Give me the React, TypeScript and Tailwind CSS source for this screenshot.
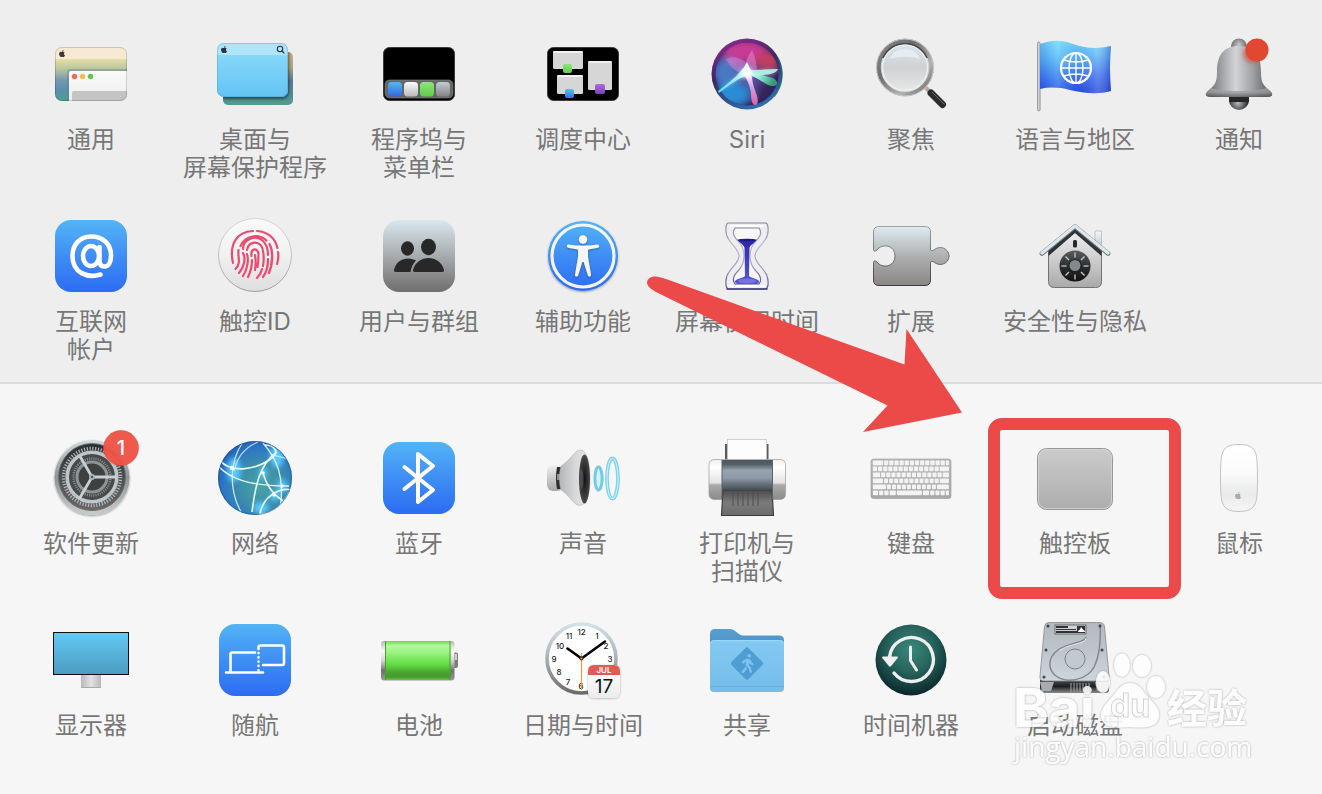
import React from "react";
import { FaApple, FaWalking } from "react-icons/fa";

type IconProps = { children: React.ReactNode };

const Icon: React.FC<IconProps> = ({ children }) => (
  <svg viewBox="0 0 80 80" className="size-20 overflow-visible" aria-hidden="true">
    {children}
  </svg>
);

// Vertical gradient, colours spread evenly unless stops are given
const VGrad: React.FC<{ id: string; colors: string[]; at?: number[] }> = ({ id, colors, at }) => (
  <linearGradient id={id} x1="0" y1="0" x2="0" y2="1">
    {colors.map((c, i) => (
      <stop key={i} offset={at ? at[i] : i / (colors.length - 1)} stopColor={c} />
    ))}
  </linearGradient>
);

const BlueTile: React.FC<{ id: string; children: React.ReactNode }> = ({ id, children }) => (
  <Icon>
    <VGrad id={id} colors={["#53b4f5", "#3f8ef5", "#2d6cf3"]} />
    <rect x="4" y="4" width="72" height="72" rx="16" fill={`url(#${id})`} />
    {children}
  </Icon>
);

const GeneralIcon = () => (
  <Icon>
    <VGrad id="genBg" colors={["#e6dfa8", "#e6dfa8", "#bcc6a0", "#7397ad", "#5a8fae", "#4ca08f"]} at={[0, 0.22, 0.4, 0.62, 0.8, 1]} />
    <VGrad id="genWin" colors={["#fafafa", "#ececec"]} />
    <clipPath id="genClip">
      <rect x="4" y="13" width="72" height="54" rx="7" />
    </clipPath>
    <g clipPath="url(#genClip)">
      <rect x="4" y="13" width="72" height="54" fill="url(#genBg)" />
      <rect x="4" y="13" width="72" height="12" fill="#f8ead2" />
      <path d="M17 70V38q0-2 2-2h60" fill="none" stroke="#5c7a7e" strokeOpacity=".35" strokeWidth="2" />
      <path d="M18 70V39q0-2 2-2h60v33z" fill="url(#genWin)" />
      <path d="M21 70V59q0-2 2-2h60v13z" fill="#c4c4c4" />
    </g>
    <rect x="4.5" y="13.5" width="71" height="53" rx="6.5" fill="none" stroke="#000" strokeOpacity=".16" />
    <circle cx="23.5" cy="42.5" r="2.7" fill="#ee6a5f" />
    <circle cx="31.5" cy="42.5" r="2.7" fill="#f5bd4f" />
    <circle cx="39.5" cy="42.5" r="2.7" fill="#61c454" />
    <FaApple x="7" y="15.5" size={8} color="#3a3a38" />
  </Icon>
);

const DesktopIcon = () => (
  <Icon>
    <VGrad id="deskBack" colors={["#c9ae84", "#a9a581", "#56799a", "#4f8a98", "#549b8e"]} at={[0, 0.3, 0.55, 0.75, 1]} />
    <VGrad id="deskFront" colors={["#92dcf8", "#78d0f8", "#63c4f5"]} />
    <filter id="deskShadow" x="-20%" y="-20%" width="140%" height="140%">
      <feDropShadow dx="1" dy="2" stdDeviation="1.8" floodOpacity=".5" />
    </filter>
    <clipPath id="deskClip">
      <rect x="8" y="18" width="70" height="53" rx="5" />
    </clipPath>
    <rect x="8" y="18" width="70" height="53" rx="5" fill="url(#deskBack)" />
    <g clipPath="url(#deskClip)">
      <rect x="2" y="9" width="71" height="54" rx="7" fill="#63c4f5" filter="url(#deskShadow)" />
    </g>
    <rect x="2" y="9" width="71" height="54" rx="7" fill="url(#deskFront)" />
    <path d="M2 21v-5q0-7 7-7h57q7 0 7 7v5z" fill="#aee5fa" />
    <rect x="2.5" y="9.5" width="70" height="53" rx="6.5" fill="none" stroke="#3c87ad" strokeOpacity=".3" />
    <FaApple x="5" y="11.5" size={8} color="#2c3438" />
    <circle cx="65" cy="15" r="2.7" fill="none" stroke="#2c3438" strokeWidth="1.1" />
    <path d="M67 17l2 2.2" stroke="#2c3438" strokeWidth="1.2" strokeLinecap="round" />
  </Icon>
);

const DockIcon = () => (
  <Icon>
    <VGrad id="dockBlue" colors={["#52b8f3", "#3567e0"]} />
    <VGrad id="dockWhite" colors={["#fbfbfb", "#b9b9b9"]} />
    <VGrad id="dockGreen" colors={["#8de57a", "#5fcb4b"]} />
    <VGrad id="dockGray" colors={["#c3ccd2", "#828486"]} />
    <rect x="4.5" y="13.5" width="71" height="53" rx="6" fill="#000" stroke="#3b3b3b" />
    <rect x="6" y="46" width="68" height="18" rx="4.5" fill="#656565" stroke="#888" strokeWidth=".6" />
    <rect x="9" y="48" width="14" height="14.5" rx="3.5" fill="url(#dockBlue)" />
    <rect x="25" y="48" width="14" height="14.5" rx="3.5" fill="url(#dockWhite)" />
    <rect x="41" y="48" width="14" height="14.5" rx="3.5" fill="url(#dockGreen)" />
    <rect x="57" y="48" width="14" height="14.5" rx="3.5" fill="url(#dockGray)" />
  </Icon>
);

const MissionIcon = () => (
  <Icon>
    <VGrad id="misBlue" colors={["#57c0ea", "#3573dd"]} />
    <VGrad id="misPurple" colors={["#b06be0", "#7d3fb4"]} />
    <VGrad id="misGreen" colors={["#8de57a", "#5fcb4b"]} />
    <rect x="4.5" y="13.5" width="71" height="53" rx="6" fill="#000" stroke="#3b3b3b" />
    <rect x="10" y="17" width="30" height="18" rx="1.5" fill="#d6d6d6" />
    <rect x="14" y="41" width="26" height="19" rx="1.5" fill="#d6d6d6" />
    <rect x="45" y="27" width="24" height="29" rx="1.5" fill="#d6d6d6" />
    <path d="M10.5 18h29M14.5 42h25M45.5 28h23" stroke="#f1f1f1" strokeWidth="2" />
    <rect x="20" y="30" width="9" height="9" rx="2" fill="url(#misGreen)" />
    <rect x="22" y="55" width="9" height="9" rx="2" fill="url(#misBlue)" />
    <rect x="52" y="50" width="10" height="10" rx="2" fill="url(#misPurple)" />
  </Icon>
);

const SiriIcon = () => (
  <Icon>
    <linearGradient id="siriRim" x1=".2" y1="0" x2=".6" y2="1">
      <stop offset="0" stopColor="#8d2a92" />
      <stop offset=".45" stopColor="#3a2a63" />
      <stop offset="1" stopColor="#2d6fae" />
    </linearGradient>
    <radialGradient id="siriBase">
      <stop offset="0" stopColor="#6d5aae" />
      <stop offset=".8" stopColor="#3f3172" />
      <stop offset="1" stopColor="#241a50" />
    </radialGradient>
    <filter id="siriBlur" x="-50%" y="-50%" width="200%" height="200%">
      <feGaussianBlur stdDeviation="4.5" />
    </filter>
    <filter id="siriGlow" x="-50%" y="-50%" width="200%" height="200%">
      <feGaussianBlur stdDeviation="2" />
    </filter>
    <clipPath id="siriClip">
      <circle cx="40" cy="40" r="31.5" />
    </clipPath>
    <linearGradient id="siriLeft" x1="1" y1="0" x2="0" y2="1">
      <stop offset="0" stopColor="#fff" />
      <stop offset="1" stopColor="#4fdcea" />
    </linearGradient>
    <linearGradient id="siriRight" x1="0" y1="0" x2="1" y2=".3">
      <stop offset="0" stopColor="#fff" />
      <stop offset=".5" stopColor="#7fe8cf" />
      <stop offset="1" stopColor="#3b9674" />
    </linearGradient>
    <VGrad id="siriDown" colors={["#fff", "#d59be0", "#dd5fa6"]} />
    <circle cx="40" cy="40" r="35.5" fill="url(#siriRim)" />
    <path d="M71 24a35 35 0 0 1-4 39" fill="none" stroke="#2a7a5c" strokeWidth="1.2" strokeOpacity=".7" />
    <g clipPath="url(#siriClip)">
      <circle cx="40" cy="40" r="32" fill="url(#siriBase)" />
      <g filter="url(#siriBlur)">
        <ellipse cx="38" cy="17" rx="23" ry="12" fill="#c83a94" />
        <ellipse cx="61" cy="27" rx="13" ry="11" fill="#c23e5e" />
        <ellipse cx="18" cy="38" rx="13" ry="14" fill="#4a78c4" />
        <ellipse cx="26" cy="60" rx="18" ry="13" fill="#2a8bd6" />
        <ellipse cx="64" cy="60" rx="12" ry="12" fill="#33245a" />
      </g>
      <path d="M19 25c10-5 21 1 26 12L40 41C31 39 24 35 19 25z" fill="#d48be0" fillOpacity=".5" />
      <path d="M45 16c4 9 6 18 4 26l-12-5c1-7 3-14 8-21z" fill="#f08ad0" fillOpacity=".5" />
    </g>
    <path d="M13 57C23 49 29 44 33 38c4-2 7-1 11 1 9-2 19-3 26-3-1 3-11 5-22 5l-10 1C29 46 22 52 13 57z" fill="#9ff2f0" filter="url(#siriGlow)" opacity=".7" />
    <path d="M36 37c4 9 7 15 8 22 0 6 1 12 4 12 4 0 3-7 1-12-3-7-4-14-5-22z" fill="url(#siriDown)" />
    <path d="M44 38c8 2 15 4 22 6 6 3 5 9-1 8-7-1-13-8-23-11z" fill="url(#siriRight)" />
    <path d="M40 36c10 0 20-1 31-1-2 6-14 6-29 7z" fill="#b6f5e8" fillOpacity=".9" />
    <path d="M11 57c9-7 17-13 21-18 3-3 6-7 8-11l5 11-5 3c-10 2-18 10-28 17z" fill="url(#siriLeft)" />
    <circle cx="40" cy="39" r="5" fill="#fff" filter="url(#siriGlow)" />
  </Icon>
);

const SpotlightIcon = () => (
  <Icon>
    <linearGradient id="spotRing" x1="0" y1="0" x2="1" y2="1">
      <stop offset="0" stopColor="#8a8a8a" />
      <stop offset=".35" stopColor="#6d6d6d" />
      <stop offset=".7" stopColor="#b4b4b4" />
      <stop offset="1" stopColor="#5f5f5f" />
    </linearGradient>
    <VGrad id="spotLens" colors={["#dce7f0", "#cfd2d4", "#e9e9e9"]} />
    <path d="M53 52l7 7" stroke="#a9a9a9" strokeWidth="4" />
    <path d="M60 59l11.5 11.5" stroke="#2c2c2c" strokeWidth="7" strokeLinecap="round" />
    <path d="M61 58l12 12" stroke="#6a6a6a" strokeWidth="1" strokeLinecap="round" />
    <circle cx="34" cy="33.5" r="26.5" fill="url(#spotLens)" stroke="url(#spotRing)" strokeWidth="4.5" />
    <circle cx="34" cy="33.5" r="28.5" fill="none" stroke="#c9c9c9" strokeWidth="1" />
    <path d="M12 24a24 24 0 0 1 44 0" fill="none" stroke="#4a4a4a" strokeWidth="1.8" />
    <circle cx="34" cy="33.5" r="22.5" fill="none" stroke="#eef2f5" strokeWidth="1.2" />
    <path d="M19 25c4-13 26-13 30 0-9-3-21-3-30 0z" fill="#e9f1f7" fillOpacity=".8" />
    <circle cx="55" cy="54" r="1.5" fill="#e0a988" />
  </Icon>
);

const FlagIcon = () => (
  <Icon>
    <linearGradient id="flagBlue" x1="0" y1="0" x2=".12" y2="1">
      <stop offset="0" stopColor="#7fe3f7" />
      <stop offset=".35" stopColor="#5fb9f5" />
      <stop offset=".75" stopColor="#3c6ff0" />
      <stop offset="1" stopColor="#2d50dc" />
    </linearGradient>
    <linearGradient id="flagFold">
      <stop offset="0" stopColor="#0c3cc8" stopOpacity=".25" />
      <stop offset=".25" stopColor="#8ff0ff" stopOpacity=".25" />
      <stop offset=".55" stopColor="#1d4fd0" stopOpacity=".08" />
      <stop offset=".8" stopColor="#fff" stopOpacity=".18" />
      <stop offset="1" stopColor="#1433b4" stopOpacity=".4" />
    </linearGradient>
    <rect x="2.5" y="8" width="2.6" height="69" rx="1.3" fill="#cfcfd2" stroke="#8d8d92" strokeWidth=".8" />
    <path d="M5 10c9-3 18-5 30-1 16 6 27 6 41 3q-2 22 0 45c-14 4-28 2-41-1-11-3-20-3-30-1z" fill="url(#flagBlue)" />
    <path d="M5 10c9-3 18-5 30-1 16 6 27 6 41 3q-2 22 0 45c-14 4-28 2-41-1-11-3-20-3-30-1z" fill="url(#flagFold)" />
    <g fill="none" stroke="#fff" strokeWidth="1.4">
      <circle cx="41" cy="34" r="15" strokeWidth="2.2" />
      <ellipse cx="41" cy="34" rx="7" ry="15" />
      <path d="M41 19v30M26 34h30M29 26q12 4 24 0M29 42q12-4 24 0" />
    </g>
  </Icon>
);

const BellIcon = () => (
  <Icon>
    <linearGradient id="bellBody">
      <stop offset="0" stopColor="#5f6163" />
      <stop offset=".25" stopColor="#a3a5a8" />
      <stop offset=".45" stopColor="#d2d4d7" />
      <stop offset=".7" stopColor="#a0a2a5" />
      <stop offset="1" stopColor="#545658" />
    </linearGradient>
    <VGrad id="bellLip" colors={["#a9abad", "#96989a", "#4c4e50"]} />
    <radialGradient id="bellKnob" cx=".5" cy=".4">
      <stop offset="0" stopColor="#c9cbcd" />
      <stop offset="1" stopColor="#6b6d6f" />
    </radialGradient>
    <radialGradient id="bellBall" cx=".45" cy=".65">
      <stop offset="0" stopColor="#b9bbbd" />
      <stop offset="1" stopColor="#27292b" />
    </radialGradient>
    <filter id="bellGlow" x="-50%" y="-50%" width="200%" height="200%">
      <feGaussianBlur stdDeviation="2" />
    </filter>
    <circle cx="40" cy="12.5" r="8" fill="url(#bellKnob)" />
    <circle cx="40" cy="66" r="10" fill="url(#bellBall)" />
    <path d="M30 62h20v6H30z" fill="#25282a" />
    <path d="M18 38c0-19 8-26 22-26s22 7 22 26c0 10 2 13 8 18 5 4 4 7-2 7H12c-6 0-7-3-2-7 6-5 8-8 8-18z" fill="url(#bellBody)" />
    <path d="M12 54c12 4 44 4 56 0l3 3c4 4 2 6-3 6H12c-5 0-7-2-3-6z" fill="url(#bellLip)" fillOpacity=".75" />
    <circle cx="53" cy="20" r="9" fill="#cf4430" fillOpacity=".6" filter="url(#bellGlow)" />
    <circle cx="58" cy="16" r="11.5" fill="#e24731" />
  </Icon>
);

const InternetIcon = () => (
  <BlueTile id="atBg">
    <g fill="none" stroke="#fff" strokeWidth="4.6" strokeLinecap="round" strokeLinejoin="round">
      <ellipse cx="40" cy="40" rx="8" ry="10" />
      <path d="M48.5 31v13.5c0 4 2 6 5 6 4 0 6.5-4 6.5-11C60 27 51 20.5 40 20.5c-11 0-18.5 8-18.5 19.5 0 17 15 22.5 28 18.5" />
    </g>
  </BlueTile>
);

const TouchIdIcon = () => (
  <Icon>
    <VGrad id="tidBg" colors={["#fafafa", "#f1f1f1", "#dedede"]} />
    <VGrad id="tidEdge" colors={["#d6d6d6", "#c3c3c3", "#9b9b9b"]} />
    <circle cx="40" cy="39" r="36.5" fill="url(#tidBg)" stroke="url(#tidEdge)" />
    <g fill="none" stroke="#ec4a6e" strokeWidth="2.2" strokeLinecap="round">
      <path d="M18 47C14 29 21 15.500 38 15M42 15c11 1 18 7 20.500 17M63 36q1 6-1 12" />
      <path d="M25.500 30c5-11 18-12.500 26-5.500M23.500 34c-1 7 3 13-3 19M54.500 28c4 7 3 14 1.500 21M57 38c1 8-1 14-3 19" />
      <path d="M28 33c0-10 12-14 19-9 5 4 6 9 6 15M28 37c3 6 1 14-4 20M53 43c0 7-1 13-5 18" />
      <path d="M32 34c1-10 15-10 16 1 1 5 1 9 0 15M32 38c2 7 0 16-4 22M47 53q-1 5-5 9" />
      <path d="M36.500 40c-1-8 6-9 7-2 0 5 0 8-1 13M37 44c0 6-1 11-4 17M40 39c1 6 1 10 0 15" />
    </g>
  </Icon>
);

const UsersIcon = () => (
  <Icon>
    <VGrad id="usersBg" colors={["#d9e7ef", "#a7abae", "#706e6e"]} />
    <rect x="4" y="4" width="72" height="72" rx="16" fill="url(#usersBg)" />
    <g fill="#282828">
      <ellipse cx="28.5" cy="32.5" rx="6.5" ry="7.2" />
      <ellipse cx="49.5" cy="31" rx="7.5" ry="8.2" />
      <path d="M17 56c-2 0-2-1-2-2 2-8 8-11.5 14-11.5 3 0 6 1 8 2-3 3-5 7-5.5 11.5z" />
      <path d="M36 56c-2 0-2-1-2-2 2-8 9-12 15.5-12S63 46 65 54c0 1 0 2-2 2z" />
    </g>
  </Icon>
);

const AccessIcon = () => (
  <Icon>
    <VGrad id="accBg" colors={["#53b4f5", "#3f8ef5", "#2d6cf3"]} />
    <filter id="accShadow" x="-20%" y="-20%" width="140%" height="140%">
      <feDropShadow dx="0" dy="1" stdDeviation="1" floodOpacity=".35" />
    </filter>
    <circle cx="40" cy="40" r="35" fill="url(#accBg)" filter="url(#accShadow)" />
    <circle cx="40" cy="40" r="31" fill="none" stroke="#f4f4f4" strokeWidth="3.2" />
    <g fill="#f6f6f6" filter="url(#accShadow)">
      <circle cx="40" cy="23.5" r="4.2" />
      <path d="M25.5 28.5c5 .8 9.5 1.2 14.5 1.2s9.5-.4 14.5-1.2c2-.2 2.3 2.8.3 3.2L45 33.500V41l3 17.500c.4 2.200-2.600 2.800-3.200.8L40.700 46h-1.400l-4.100 13.300c-.6 2-3.600 1.400-3.200-.8L35 41v-7.500l-9.800-1.800c-2-.4-1.700-3.400.3-3.200z" />
    </g>
  </Icon>
);

const HourglassIcon = () => (
  <Icon>
    <VGrad id="hgSand" colors={["#2b26a3", "#4440c4", "#5953d8"]} />
    <VGrad id="hgEdge" colors={["#8b869c", "#bdb9cc", "#a5a0bd", "#5c5585"]} />
    <path d="M21 7h38c3 2 3 12-1 17-4 6-10 10-10 16s6 10 10 16c4 5 4 15 1 17H21c-3-2-3-12 1-17 4-6 10-10 10-16s-6-10-10-16c-4-5-4-15-1-17z" fill="#ededf2" stroke="url(#hgEdge)" strokeWidth="1.2" />
    <path d="M23 10h34M22 70h36" stroke="#fff" strokeWidth="2" />
    <path d="M20 73h40" stroke="#3f3a78" strokeWidth="1.5" strokeLinecap="round" />
    <path d="M28 12h24c3 4 1 9-3 13-5 5-6 9-6 15s1 10 6 15c4 4 6 9 3 13H28c-3-4-1-9 3-13 5-5 6-9 6-15s-1-10-6-15c-4-4-6-9-3-13z" fill="#f7f7fa" stroke="url(#hgEdge)" strokeWidth="1.2" />
    <path d="M30 23.500q10 2 20 0c-3 4-6 5-7.500 8L42 60c2 2 7 2 10 5 0 3-2 3-4 3H32c-2 0-4 0-4-3 3-3 8-3 10-5l-.5-28.500C36 28 33 27 30 23.500z" fill="url(#hgSand)" />
    <ellipse cx="40" cy="24" rx="9" ry="1.3" fill="#1d1a85" />
    <ellipse cx="40" cy="65" rx="9" ry="2.5" fill="#7772e2" />
  </Icon>
);

const PuzzleIcon = () => (
  <Icon>
    <VGrad id="puzBg" colors={["#deebf1", "#aeb0b2", "#8a8684"]} />
    <VGrad id="puzEdge" colors={["#9aa3a8", "#6f7072", "#3f3c3b"]} />
    <path
      d="M8 10.500h46q5.500 0 5.500 5.500v17c0 2 2 2 3.500 1 5-5 15-2 15 6s-10 11-15 6c-1.500-1-3.500-1-3.500 1v17q0 5.500-5.500 5.500H8Q2.500 69.500 2.500 64V46.500c0-2 2-2 3.500-.5 5 7 18 5 18-6S11 27 6 34c-1.500 1.500-3.500 1.500-3.500-.5V16q0-5.500 5.500-5.500z"
      fill="url(#puzBg)"
      stroke="url(#puzEdge)"
    />
  </Icon>
);

const SecurityIcon = () => (
  <Icon>
    <VGrad id="houseWall" colors={["#eef0f1", "#cfcfd0", "#a9a9a9"]} />
    <VGrad id="houseDial" colors={["#5b5e60", "#2c2e30", "#111"]} />
    <VGrad id="houseChim" colors={["#f1f7fa", "#b5bfc5"]} />
    <rect x="60" y="15" width="6.5" height="20" rx="1" fill="url(#houseChim)" stroke="#9fa8ad" strokeWidth=".6" />
    <path d="M13.500 34L40 13l26.500 21v31.500q0 6-6 6h-41q-6 0-6-6z" fill="url(#houseWall)" stroke="#727272" />
    <path d="M13.500 40L40 17l26.500 23v-8L40 10 13.500 32z" fill="#2f3335" />
    <path d="M7 37.500L40 10.500l33 27" fill="none" stroke="#707a80" strokeWidth="4.8" strokeLinecap="round" strokeLinejoin="round" />
    <path d="M7 37L40 10l33 27" fill="none" stroke="#dde7ec" strokeWidth="3.4" strokeLinecap="round" strokeLinejoin="round" />
    <rect x="38" y="24" width="4" height="7.5" rx="1.5" fill="#25282a" />
    <circle cx="40" cy="50" r="15.5" fill="url(#houseDial)" />
    <g stroke="#c6c8ca" strokeWidth="1.3">
      {[0, 45, 90, 135, 180, 225, 270, 315].map((a) => (
        <path key={a} d="M40 36.500v5" transform={`rotate(${a} 40 50)`} />
      ))}
    </g>
    <circle cx="40" cy="50" r="6.8" fill="#1e2022" />
    <circle cx="40" cy="49.5" r="5.5" fill="#85888a" />
  </Icon>
);

const UpdateIcon = () => (
  <Icon>
    <VGrad id="gearRim" colors={["#cfdbe0", "#8e9497", "#c9cccd"]} />
    <VGrad id="gearDark" colors={["#2b2e2f", "#4c4c4c", "#6b6866"]} />
    <filter id="gearShadow" x="-20%" y="-20%" width="140%" height="140%">
      <feDropShadow dx="0" dy="1" stdDeviation="1" floodOpacity=".4" />
    </filter>
    <circle cx="41" cy="39.5" r="37.5" fill="url(#gearRim)" filter="url(#gearShadow)" />
    <circle cx="41" cy="39" r="33.5" fill="url(#gearDark)" stroke="#696f72" />
    <circle cx="41" cy="39" r="28.5" fill="none" stroke="#b0b8bb" strokeWidth="3.5" strokeDasharray="1.2 1.6" />
    <circle cx="41" cy="39" r="24.8" fill="#484a4a" stroke="#bcc6ca" strokeWidth="3.6" />
    <circle cx="41" cy="39" r="18.5" fill="none" stroke="#85898b" strokeWidth="2.5" strokeDasharray="1.1 1.1" />
    <circle cx="41" cy="39" r="15" fill="#3f4141" stroke="#8e9496" strokeWidth="3" />
    <path d="M41 39H66M41 39L28.500 17.500M41 39L28.500 60.500" stroke="#c6cfd2" strokeWidth="2.8" />
    <circle cx="41" cy="39" r="3" fill="#a9b0b3" />
    <circle cx="41" cy="39" r="1" fill="#333" />
    <circle cx="70" cy="10" r="17.5" fill="#ee5546" fillOpacity=".97" stroke="#d9463a" strokeWidth=".5" />
    <text x="70" y="17" textAnchor="middle" fill="#fff" className="font-['Inter',sans-serif] text-[20px] font-medium">
      1
    </text>
  </Icon>
);

const NetworkIcon = () => (
  <Icon>
    <radialGradient id="netBg" cx=".58" cy=".6" r=".62">
      <stop offset="0" stopColor="#4ba3a6" />
      <stop offset=".45" stopColor="#3c8fa8" />
      <stop offset=".8" stopColor="#2f78c4" />
      <stop offset="1" stopColor="#2263b8" />
    </radialGradient>
    <clipPath id="netClip">
      <circle cx="40" cy="40" r="37" />
    </clipPath>
    <filter id="netGlow" x="-100%" y="-100%" width="300%" height="300%">
      <feGaussianBlur stdDeviation="2.5" />
    </filter>
    <circle cx="40" cy="40" r="37" fill="url(#netBg)" />
    <g clipPath="url(#netClip)">
      <g fill="#58c8ff" filter="url(#netGlow)">
        <ellipse cx="19" cy="32" rx="7" ry="12" />
        <ellipse cx="62" cy="18" rx="7" ry="12" />
        <ellipse cx="48" cy="35" rx="4" ry="6" />
        <ellipse cx="67" cy="48" rx="5" ry="7" />
        <ellipse cx="46" cy="70" rx="8" ry="6" />
        <circle cx="60" cy="58" r="5" />
      </g>
      <g fill="none" stroke="#e6fbff" strokeWidth="1.3">
        <path d="M5 22c10 14 38 10 53-3 6-6 1-12-8-12" strokeWidth="1.7" />
        <path d="M2 27c14 15 34 21 72 21" />
        <path d="M28 4C14 24 14 52 26 74" strokeOpacity=".8" />
        <path d="M48 5c14 16 22 34 17 66" strokeOpacity=".9" />
        <path d="M19 33c3-14 12-24 24-29" strokeOpacity=".75" />
        <path d="M62 14C44 26 40 50 37 74" strokeWidth="1.6" />
        <path d="M48 35c4 14 12 24 24 30" strokeWidth="1.6" />
        <path d="M77 52c-12-3-29 6-32 24 10 0 22-6 29-22" strokeWidth="1.7" />
        <path d="M76 22c-6-2-12-4-20-5" strokeOpacity=".6" />
      </g>
      <g fill="#fff">
        <circle cx="17" cy="30" r="2.2" />
        <circle cx="48" cy="35" r="1.8" />
        <circle cx="67" cy="48" r="1.8" />
        <circle cx="59" cy="57" r="1.8" />
      </g>
    </g>
    <circle cx="40" cy="40" r="36.5" fill="none" stroke="#1c4f92" strokeOpacity=".6" />
  </Icon>
);

const BluetoothIcon = () => (
  <BlueTile id="btBg">
    <path
      d="M25.500 29L54 52 39 64V16l15 12-28.500 23"
      fill="none"
      stroke="#fff"
      strokeWidth="4"
      strokeLinecap="round"
      strokeLinejoin="round"
    />
  </BlueTile>
);

const SoundIcon = () => (
  <Icon>
    <linearGradient id="sndCone">
      <stop offset="0" stopColor="#b4b6b9" />
      <stop offset=".5" stopColor="#d6d7d9" />
      <stop offset="1" stopColor="#e9e9e9" />
    </linearGradient>
    <VGrad id="sndBack" colors={["#f1f1f1", "#c9cacb", "#a6a7a9"]} />
    <radialGradient id="sndHole">
      <stop offset="0" stopColor="#111" />
      <stop offset="1" stopColor="#4a4a4a" />
    </radialGradient>
    <rect x="4" y="27" width="16" height="26" rx="6" fill="url(#sndBack)" />
    <path d="M14 29h5v22h-5q-2-11 0-22z" fill="#2b2d2f" />
    <path d="M14 36h5v6h-5z" fill="#8d9093" />
    <path d="M18 28c7-4 11-11 16-15 10-5 13 13 13 27s-3 30-13 27c-5-3-9-11-16-15-2-7-2-17 0-24z" fill="url(#sndCone)" stroke="#b4b4b4" strokeWidth=".6" />
    <ellipse cx="41.5" cy="41" rx="5.5" ry="24.5" fill="url(#sndHole)" />
    <ellipse cx="38.5" cy="41" rx="2" ry="10" fill="#55575a" fillOpacity=".7" />
    <ellipse cx="55.5" cy="40.5" rx="3.6" ry="11.5" fill="#d6f1f8" stroke="#70cbe4" strokeWidth="3" />
    <ellipse cx="69.5" cy="40.5" rx="5.5" ry="20" fill="none" stroke="#7ed3ea" strokeWidth="3.8" />
    <ellipse cx="69.5" cy="40.5" rx="5.5" ry="20" fill="none" stroke="#c5edf7" strokeWidth="1.2" />
  </Icon>
);

const PrinterIcon = () => (
  <Icon>
    <VGrad id="prMid" colors={["#4b555d", "#566069", "#97a3af", "#8d9aa7", "#66717b", "#454e56"]} at={[0, 0.15, 0.35, 0.6, 0.8, 1]} />
    <VGrad id="prSide" colors={["#efefef", "#ffffff", "#e3e3e3", "#a9a9a9", "#8b8b8b"]} at={[0, 0.2, 0.58, 0.64, 1]} />
    <VGrad id="prTray" colors={["#4b4b4b", "#7b7b7b", "#6b6b6b"]} />
    <path d="M18 6h3v18h-3zM58.500 6h3v18h-3z" fill="#555b60" />
    <rect x="20.5" y="1.5" width="39" height="22" fill="#fdfdfd" stroke="#c6c6c6" strokeWidth=".8" />
    <rect x="2" y="21.5" width="76.5" height="40" rx="5" fill="url(#prSide)" stroke="#9b9b9b" strokeWidth=".7" />
    <path d="M15 22h50.500v39.500H15z" fill="#4f4f4f" />
    <path d="M16 52h49l1.500 25.500h-52z" fill="url(#prTray)" stroke="#3d3d3d" strokeWidth="1.2" />
    <path d="M26 54v14M31 54v14M36 54v14M41 54v14M46 54v14M51 54v14" stroke="#4e4e4e" strokeWidth="1" />
    <path d="M15 22h50.500v30H15z" fill="url(#prMid)" />
    <path d="M15 22v39.500M65.500 22v39.500" stroke="#5f6468" strokeWidth="1" />
  </Icon>
);

// Key widths of each keyboard row
const keyRows = [
  [11, 5, 5, 5, 5, 5, 5, 5, 5, 5, 5, 5, 5, 4],
  [5, 5, 5, 5, 5, 5, 5, 5, 5, 5, 5, 5, 5, 10],
  [8, 5, 5, 5, 5, 5, 5, 5, 5, 5, 5, 5, 5, 7],
  [11, 5, 5, 5, 5, 5, 5, 5, 5, 5, 5, 5, 10],
  [14, 5, 5, 5, 5, 5, 5, 5, 5, 5, 5, 13],
  [6, 5, 5, 7, 25, 7, 5, 5, 5, 4],
];

const KeyboardIcon = () => (
  <Icon>
    <VGrad id="kbBg" colors={["#bcbcbc", "#a7a7a7"]} />
    <rect x="0" y="21" width="80" height="39.5" rx="2.5" fill="url(#kbBg)" stroke="#9c9c9c" strokeWidth=".6" />
    {keyRows.map((row, r) => {
      const total = row.reduce((a, b) => a + b, 0);
      let x = 1.5;
      return row.map((w, i) => {
        const kw = (w / total) * 77;
        const key = <rect key={`${r}-${i}`} x={x + 0.4} y={22.5 + r * 6} width={kw - 1} height="4.8" rx=".8" fill="#f3f3f3" />;
        x += kw;
        return key;
      });
    })}
  </Icon>
);

const TrackpadIcon = () => (
  <Icon>
    <VGrad id="tpBg" colors={["#cbcbcb", "#adadad"]} />
    <rect x="2.5" y="10.5" width="75" height="61" rx="9" fill="url(#tpBg)" stroke="#979797" />
    <rect x="3.5" y="11.5" width="73" height="59" rx="8" fill="none" stroke="#d6d6d6" strokeWidth=".8" />
  </Icon>
);

const MouseIcon = () => (
  <Icon>
    <VGrad id="msBg" colors={["#ffffff", "#fbfbfb", "#e9eaeb", "#f6f6f6"]} at={[0, 0.4, 0.75, 1]} />
    <path
      d="M40 6.500c13 0 17 4 18 16 .7 11 .7 24 0 35-1 12-6 16-18 16s-17-4-18-16c-.7-11-.7-24 0-35 1-12 5-16 18-16z"
      fill="url(#msBg)"
      stroke="#c3c3c3"
    />
    <FaApple x="35" y="53.5" size={8} color="#a9abad" />
  </Icon>
);

const DisplayIcon = () => (
  <Icon>
    <VGrad id="dpBg" colors={["#63caf5", "#4c9bc1"]} />
    <linearGradient id="dpStand">
      <stop offset="0" stopColor="#b9b9bb" />
      <stop offset=".5" stopColor="#e2e2e3" />
      <stop offset="1" stopColor="#b9b9bb" />
    </linearGradient>
    <path d="M30 54h20v14H30z" fill="url(#dpStand)" />
    <path d="M30 67.500h20" stroke="#aaa" />
    <rect x="2.5" y="12.5" width="75" height="42" fill="url(#dpBg)" stroke="#111" />
  </Icon>
);

const SidecarIcon = () => (
  <BlueTile id="scBg">
    <g fill="none" stroke="#fff" strokeWidth="2.6" strokeLinecap="round" strokeLinejoin="round">
      <path d="M11 52.500h37M15.500 52V34.500q0-2 2-2H40" />
      <path d="M43.500 29v-1.500q0-2 2-2H67q2 0 2 2V43q0 2-2 2H48" />
      <path d="M43.500 33v19" strokeDasharray=".1 4.2" />
    </g>
  </BlueTile>
);

const BatteryIcon = () => (
  <Icon>
    <VGrad id="batGreen" colors={["#68d94a", "#b7f5a4", "#9df586", "#62dc44", "#4aa52f", "#489a2e", "#6cbf50"]} at={[0, 0.12, 0.27, 0.6, 0.8, 0.92, 1]} />
    <VGrad id="batMetal" colors={["#b9b9b9", "#fafafa", "#d5d5d5", "#707070", "#9b9b9b"]} />
    <rect x="73" y="32.5" width="6" height="15.5" rx="2" fill="#7c7c7c" />
    <path d="M77 34v6" stroke="#eee" strokeWidth="1.5" />
    <rect x="2" y="21" width="73.5" height="39.5" rx="3" fill="url(#batMetal)" />
    <rect x="6" y="21" width="65.5" height="39" fill="url(#batGreen)" />
    <path d="M6.500 21v39M71 21v39" stroke="#4c9c34" strokeWidth="1" />
  </Icon>
);

const numerals = [
  ["12", 38.5, 15], ["1", 54, 19], ["2", 63, 29], ["3", 67, 42], ["6", 38, 69], ["7", 25, 65],
  ["8", 16, 55], ["9", 11, 42], ["10", 17, 29], ["11", 26, 19],
] as const;

const DateTimeIcon = () => (
  <Icon>
    <VGrad id="clkRim" colors={["#d3e2e9", "#a9b1b5", "#6d6b6a"]} />
    <VGrad id="calBg" colors={["#fefefe", "#ececec"]} />
    <filter id="calShadow" x="-20%" y="-20%" width="140%" height="140%">
      <feDropShadow dx="0" dy="0.5" stdDeviation=".8" floodOpacity=".3" />
    </filter>
    <circle cx="38.5" cy="38.5" r="34.5" fill="#fff" stroke="url(#clkRim)" strokeWidth="3.6" />
    {numerals.map(([n, x, y]) => (
      <text key={n} x={x} y={y} textAnchor="middle" fill="#222" className="font-['Inter',sans-serif] text-[8px] font-medium">
        {n}
      </text>
    ))}
    <path d="M38.500 38.500L24.500 28.500" stroke="#000" strokeWidth="2.6" strokeLinecap="round" />
    <path d="M38.500 38.500L62 21.500" stroke="#000" strokeWidth="2.6" strokeLinecap="round" />
    <path d="M38.500 33v37" stroke="#f19b37" strokeWidth="1.2" />
    <circle cx="38.5" cy="38.5" r="2" fill="#222" />
    <circle cx="38.5" cy="38.5" r="1" fill="#f19b37" />
    <rect x="45" y="45" width="32" height="33" rx="6" fill="url(#calBg)" filter="url(#calShadow)" />
    <path d="M45 55v-4q0-6 6-6h20q6 0 6 6v4z" fill="#e25b50" />
    <text x="61" y="53" textAnchor="middle" fill="#fff" className="font-['Inter',sans-serif] text-[8px] font-semibold">
      JUL
    </text>
    <text x="61" y="73" textAnchor="middle" fill="#111" className="font-['Inter',sans-serif] text-[19px]">
      17
    </text>
  </Icon>
);

const SharingIcon = () => (
  <Icon>
    <VGrad id="shBack" colors={["#5a9fd0", "#4a8fca"]} />
    <VGrad id="shFront" colors={["#83c9f2", "#74bdea"]} />
    <path d="M3 30V14q0-5 5-5h15q3 0 5 2l4 3q2 1.500 5 1.500h35q5 0 5 5V30z" fill="url(#shBack)" />
    <rect x="3" y="20" width="74" height="52" rx="4" fill="url(#shFront)" />
    <path d="M3 66.500h74" stroke="#62abdb" strokeOpacity=".7" />
    <path d="M3.500 24q0-3.500 4-3.500h65q4 0 4 3.500" fill="none" stroke="#a4dbf8" strokeWidth=".8" />
    <path d="M38.500 28q1.500-1.500 3 0l14 14q1.500 1.500 0 3l-14 14q-1.500 1.500-3 0l-14-14q-1.500-1.500 0-3z" fill="#4f9dd2" />
    <FaWalking x="31" y="34" size={19} color="#7fc3ec" />
  </Icon>
);

const TimeMachineIcon = () => (
  <Icon>
    <radialGradient id="tmBg" cx=".5" cy=".35" r=".65">
      <stop offset="0" stopColor="#3c877c" />
      <stop offset=".5" stopColor="#25635b" />
      <stop offset="1" stopColor="#0c262b" />
    </radialGradient>
    <circle cx="40" cy="40" r="35.5" fill="url(#tmBg)" />
    <g fill="none" stroke="#efefef" strokeWidth="3.4" strokeLinecap="round" strokeLinejoin="round">
      <path d="M18.500 37A22 22 0 1 1 23 53" />
      <path d="M39.500 27v13.500l6 9.500" strokeWidth="3" />
    </g>
    <path d="M12 36.500h14q1.500 0 .7 1.500l-6.500 8q-1.200 1.300-2.400 0L11.300 38q-.8-1.500.7-1.500z" fill="#efefef" />
  </Icon>
);

const DiskIcon = () => (
  <Icon>
    <VGrad id="hdTop" colors={["#b3b9bd", "#bfc6cb", "#cdd6dc"]} />
    <VGrad id="hdSide" colors={["#4a4d50", "#1d1e1f", "#8b8d8f"]} />
    <path d="M5 60h69v10q0 3-3 3H8q-3 0-3-3z" fill="url(#hdSide)" />
    <path d="M5 62h14l-3 9H7zM60 62h14l-1 9H62z" fill="#a9acaf" />
    <path d="M36 63v9M39 63v9M42 63v9M45 63v9M48 63v9M51 63v9M54 63v9" stroke="#a5a5a5" strokeWidth="1" />
    <path d="M14 2.500h50q5 0 5.500 4L74 56q.5 5-4 5H9q-4.500 0-4-5L9.500 6.500q.5-4 4.500-4z" fill="url(#hdTop)" stroke="#84898d" strokeWidth=".8" />
    <rect x="20" y="5" width="31" height="9" fill="#cfd3d5" stroke="#55585a" strokeWidth=".8" />
    <path d="M21 6h12v2H21zM21 9h20v1H21zM21 11h22v2H21zM42 6h8v7h-8z" fill="#303234" />
    <path d="M43 12q0-2 2-2.500l1-2.500 2 2.500q2 .5 2 2.500z" fill="#fff" />
    <path d="M51 17c0 6-17 5-28 13-11 8-10 20-2 26 11 8 31 4 38-9 5-10 7-25 6-43" fill="none" stroke="#84898d" strokeWidth="1.5" />
    <path d="M51 18c0 6-16 5-27 13" fill="none" stroke="#eef2f4" strokeWidth=".8" />
    <circle cx="40" cy="39" r="10" fill="#c3cacf" stroke="#7d8286" strokeWidth="1" />
    <g fill="#404446">
      <circle cx="13" cy="6" r="1.5" />
      <circle cx="65" cy="6" r="1.5" />
      <circle cx="11" cy="30" r="1.5" />
      <circle cx="67" cy="30" r="1.5" />
      <circle cx="9" cy="57" r="1.5" />
      <circle cx="69" cy="57" r="1.5" />
    </g>
  </Icon>
);

type Pane = { label: string; icon: React.FC; highlighted?: boolean };

const personal: Pane[] = [
  { label: "通用", icon: GeneralIcon },
  { label: "桌面与\n屏幕保护程序", icon: DesktopIcon },
  { label: "程序坞与\n菜单栏", icon: DockIcon },
  { label: "调度中心", icon: MissionIcon },
  { label: "Siri", icon: SiriIcon },
  { label: "聚焦", icon: SpotlightIcon },
  { label: "语言与地区", icon: FlagIcon },
  { label: "通知", icon: BellIcon },
  { label: "互联网\n帐户", icon: InternetIcon },
  { label: "触控ID", icon: TouchIdIcon },
  { label: "用户与群组", icon: UsersIcon },
  { label: "辅助功能", icon: AccessIcon },
  { label: "屏幕使用时间", icon: HourglassIcon },
  { label: "扩展", icon: PuzzleIcon },
  { label: "安全性与隐私", icon: SecurityIcon },
];

const hardware: Pane[] = [
  { label: "软件更新", icon: UpdateIcon },
  { label: "网络", icon: NetworkIcon },
  { label: "蓝牙", icon: BluetoothIcon },
  { label: "声音", icon: SoundIcon },
  { label: "打印机与\n扫描仪", icon: PrinterIcon },
  { label: "键盘", icon: KeyboardIcon },
  { label: "触控板", icon: TrackpadIcon, highlighted: true },
  { label: "鼠标", icon: MouseIcon },
  { label: "显示器", icon: DisplayIcon },
  { label: "随航", icon: SidecarIcon },
  { label: "电池", icon: BatteryIcon },
  { label: "日期与时间", icon: DateTimeIcon },
  { label: "共享", icon: SharingIcon },
  { label: "时间机器", icon: TimeMachineIcon },
  { label: "启动磁盘", icon: DiskIcon },
];

const PaneGrid: React.FC<{ panes: Pane[] }> = ({ panes }) => (
  <div className="grid grid-cols-8 gap-y-[34px] pl-[9px] pr-px">
    {panes.map(({ label, icon: PaneIcon, highlighted }) => (
      <button key={label} type="button" className="relative flex flex-col items-center gap-3">
        <PaneIcon />
        <span className="h-14 whitespace-pre text-center text-2xl leading-7 text-[#777777]">{label}</span>
        {highlighted && (
          <span className="absolute -left-[5px] -top-5 h-[181px] w-[193px] rounded-[14px] border-12 border-[#ec4949]" />
        )}
      </button>
    ))}
  </div>
);

const Watermark = () => (
  <svg viewBox="0 0 245 125" className="pointer-events-none absolute left-[1010px] top-[645px] w-[245px] opacity-85">
    <filter id="wmShadow" x="-10%" y="-10%" width="120%" height="120%">
      <feDropShadow dx="0" dy="0" stdDeviation="1" floodColor="#777" floodOpacity=".75" />
    </filter>
    <g fill="#fff" filter="url(#wmShadow)">
      <text x="3" y="82" className="font-['Inter',sans-serif] text-[54px] font-bold">Bai</text>
      <ellipse cx="93" cy="37" rx="7" ry="11" />
      <ellipse cx="112" cy="20" rx="8" ry="11.5" />
      <ellipse cx="132" cy="21" rx="9" ry="11" />
      <ellipse cx="146" cy="42" rx="9" ry="11" />
      <path d="M120 38c10 0 13 9 19 15 7 7 11 12 10 19-2 11-13 11-29 10-16 1-27 1-29-10-1-7 4-12 10-19 6-6 9-15 19-15z" />
      <text x="157" y="78" className="font-['Noto_Sans_CJK_SC',sans-serif] text-[40px] font-bold">经验</text>
      <text x="4" y="112" className="font-['Open_Sans',sans-serif] text-[28px]">jingyan.baidu.com</text>
    </g>
    <text x="120" y="72" textAnchor="middle" fill="#fff" stroke="#cfcfcf" className="font-['Inter',sans-serif] text-[32px] font-bold">du</text>
  </svg>
);

const App: React.FC = () => {
  return (
    <main className="relative flex min-h-screen flex-col overflow-hidden bg-[#f6f6f6] font-['Inter','Noto_Sans_CJK_SC',sans-serif]">
      <section className="border-b-2 border-[#dcdcdc] bg-[#eeeeee] pb-[18px] pt-[34px]">
        <PaneGrid panes={personal} />
      </section>
      <section className="pt-[54px]">
        <PaneGrid panes={hardware} />
      </section>

      {/* Arrow pointing at the trackpad pane */}
      <svg viewBox="0 0 318 158" className="pointer-events-none absolute left-[646px] top-[276px] w-[318px]" aria-hidden="true">
        <path d="M8 .5q4-.5 12 2.500L258.500 88.500 260.500 53 316 136.500 217 156 241.500 129.500 13 17.500C4 13 1 10 1 6q1-5 7-5.500z" fill="#ec4949" />
      </svg>
      <Watermark />
    </main>
  );
};

export default App;
